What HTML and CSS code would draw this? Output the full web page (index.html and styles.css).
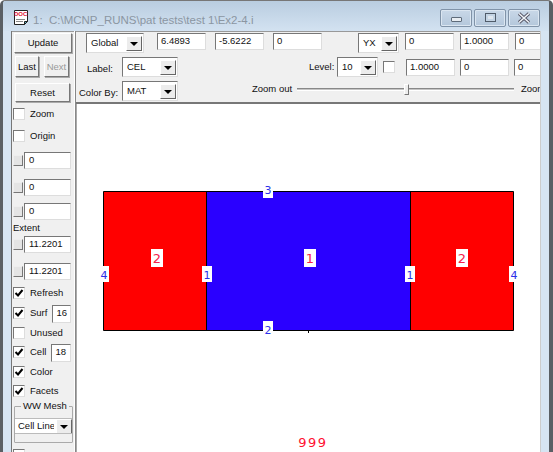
FILE: index.html
```html
<!DOCTYPE html>
<html lang="en">
<head>
<meta charset="utf-8">
<title>MCNP plot</title>
<link rel="stylesheet" href="styles.css">
</head>
<body>
<div class="window">
  <header class="titlebar">
    <svg class="docicon" width="16" height="17" viewBox="0 0 16 17"><path d="M1.500 1.500h13v11l-3 3h-10z" fill="#fff" stroke="#222"/><path d="M3 10.500h9M3 12.500h7" stroke="#888"/><path d="M11.500 15.500v-3h3z" fill="#5bc" stroke="#222"/></svg>
    <span class="doc-tag">DOC</span>
    <span class="title">1:&nbsp; C:\MCNP_RUNS\pat tests\test 1\Ex2-4.i</span>
    <div class="controls">
      <div class="ctl ctl-min"><span class="glyph-min"></span></div>
      <div class="ctl ctl-max"><span class="glyph-max"></span></div>
      <div class="ctl ctl-close"><svg width="16" height="12" viewBox="0 0 16 12"><path d="M3 1.500 13 10.500M13 1.500 3 10.500" stroke="#556" stroke-width="3.400"/><path d="M3 1.500 13 10.500M13 1.500 3 10.500" stroke="#eef2f6" stroke-width="1.600"/></svg></div>
    </div>
  </header>
  <div class="client">
    <aside class="sidebar">
      <div class="btn btn-update">Update</div>
      <div class="btn-row"><div class="btn btn-last">Last</div><div class="btn btn-next">Next</div></div>
      <div class="btn btn-reset">Reset</div>
      <div class="check check-zoom"><span class="box"></span>Zoom</div>
      <div class="check check-origin"><span class="box"></span>Origin</div>
      <div class="spin spin-1"><span class="nub"></span><div class="field grow">0</div></div>
      <div class="spin spin-2"><span class="nub"></span><div class="field grow">0</div></div>
      <div class="spin spin-2b"><span class="nub"></span><div class="field grow">0</div></div>
      <div class="extent">Extent</div>
      <div class="spin spin-3"><span class="nub"></span><div class="field grow">11.2201</div></div>
      <div class="spin spin-4"><span class="nub"></span><div class="field grow">11.2201</div></div>
      <div class="check check-refresh"><span class="box on"></span>Refresh</div>
      <div class="check check-surf"><span class="box on"></span>Surf<div class="field field-surf">16</div></div>
      <div class="check check-unused"><span class="box"></span>Unused</div>
      <div class="check check-cell"><span class="box on"></span>Cell<div class="field field-cell">18</div></div>
      <div class="check check-color"><span class="box on"></span>Color</div>
      <div class="check check-facets"><span class="box on"></span>Facets</div>
      <fieldset class="wwmesh">
        <legend>WW Mesh</legend>
        <div class="mesh-select"><span class="mesh-text">Cell Line</span><span class="arrow"></span></div>
      </fieldset>
      <div class="check check-last"><span class="box"></span>Dest</div>
    </aside>
    <main class="main">
      <div class="toolbar">
        <div class="tb-row tb-row-1">
          <div class="select select-global"><span>Global</span><span class="arrow"></span></div>
          <div class="field f-49 m-first">6.4893</div>
          <div class="field f-49 m-9">-5.6222</div>
          <div class="field f-49 m-10">0</div>
          <div class="select select-yx"><span>YX</span><span class="arrow"></span></div>
          <div class="field f-49 m-6">0</div>
          <div class="field f-49 m-6">1.0000</div>
          <div class="field f-49 m-6">0</div>
        </div>
        <div class="tb-row tb-row-2">
          <label class="lbl lbl-label">Label:</label>
          <div class="select select-label"><span>CEL</span><span class="arrow"></span></div>
          <label class="lbl lbl-level">Level:</label>
          <div class="select select-level"><span>10</span><span class="arrow"></span></div>
          <span class="box box-level"></span>
          <div class="field f-49 m-11">1.0000</div>
          <div class="field f-49 m-5">0</div>
          <div class="field f-49 m-5">0</div>
        </div>
        <div class="tb-row tb-row-3">
          <label class="lbl lbl-color">Color By:</label>
          <div class="select select-label"><span>MAT</span><span class="arrow"></span></div>
          <label class="lbl lbl-zoomout">Zoom out</label>
          <div class="slider"><span class="thumb"></span></div>
          <label class="lbl lbl-zoomin">Zoom</label>
        </div>
      </div>
      <div class="canvas">
        <svg class="plot" width="465" height="348" viewBox="76 104 465 348">
          <rect x="103.500" y="191.500" width="103" height="139" fill="#ff0000"/>
          <rect x="206.500" y="191.500" width="204" height="139" fill="#2a00ff"/>
          <rect x="410.500" y="191.500" width="103" height="139" fill="#ff0000"/>
          <path d="M103.500 191.500H513.500V330.500H103.500ZM206.500 191.500V330.500M410.500 191.500V330.500M308.500 330.500V333" fill="none" stroke="#000"/>
          <g fill="#fff">
            <rect x="151" y="249" width="12" height="18"/><rect x="304" y="249" width="12" height="18"/><rect x="456" y="249" width="12" height="18"/>
            <rect x="263" y="186" width="10" height="12"/><rect x="263" y="321" width="10" height="12"/>
            <rect x="202" y="266" width="10" height="16"/><rect x="405" y="266" width="10" height="16"/>
            <rect x="103" y="266" width="6" height="16"/><rect x="509" y="266" width="5" height="16"/>
          </g>
          <g class="cell-num">
            <text x="157" y="263">2</text><text x="310" y="263">1</text><text x="462" y="263">2</text>
            <text class="tail" x="313" y="447">999</text>
          </g>
          <g class="surf-num">
            <text x="268" y="194">3</text><text x="268" y="334">2</text>
            <text x="207" y="279">1</text><text x="410" y="279">1</text>
            <text x="104" y="279">4</text><text x="514" y="279">4</text>
          </g>
        </svg>
      </div>
    </main>
  </div>
</div>
</body>
</html>
```
FILE: styles.css
```css
html, body { margin: 0; padding: 0; height: 452px; overflow: hidden; background: #fff; }
* { box-sizing: border-box; }
body { font: 9.5px/12px "Liberation Sans", Arial, sans-serif; color: #111; }

.window {
  width: 553px; height: 452px; overflow: hidden;
  display: flex; flex-direction: column;
  background: #d6e4f2;
  border-left: 3px solid #5a5f64; border-right: 4px solid #5a5f64;
  border-top: 1px solid #777;
  border-top-left-radius: 5px; border-top-right-radius: 5px;
}

.titlebar {
  position: relative;
  height: 30px; flex: none;
  display: flex; align-items: center;
  padding: 0 0 0 10px;
  background: linear-gradient(#b9cde0, #d3e2f1);
}
.docicon { flex: none; margin-top: 3px; }
.doc-tag { position: absolute; left: 11px; top: 10px; font: bold 6px/6px "Liberation Sans", sans-serif; color: #e01030; }
.title { margin-left: 4px; margin-top: 8px; font-size: 11.500px; color: #8b96a2; white-space: nowrap; }
.controls { margin-left: auto; margin-right: 9px; margin-top: 3px; display: flex; gap: 2px; }
.ctl {
  width: 32px; height: 18px;
  display: flex; align-items: center; justify-content: center;
  border: 1px solid #8093a8; border-radius: 2px;
  background: linear-gradient(#c9d8e8, #b4c7db);
  box-shadow: inset 0 0 0 1px #dbe6f1;
}
.glyph-min { width: 11px; height: 5px; margin-top: 3px; background: #e8edf2; border: 1px solid #5e6b7a; border-radius: 1px; }
.glyph-max { width: 11px; height: 9px; background: #dfe7ef; border: 1px solid #505c6a; box-shadow: inset 0 0 0 2px #c4d4e4; }

.client {
  flex: 1; min-height: 0;
  display: flex;
  margin: 0 8px 0 8px;
  background: #f0f0f0;
  border-left: 1px solid #777;
}

.sidebar {
  width: 63px; flex: none;
  height: 421px; overflow: hidden;
  padding: 2px 1px 0 1px;
  background: #f0f0f0;
  box-shadow: inset 0 1px 0 #999;
  display: flex; flex-direction: column; align-items: flex-start;
}
.sidebar > * { flex: none; }
.btn {
  display: flex; align-items: center; justify-content: center;
  background: #f0f0f0;
  border: 1px solid; border-color: #fff #777 #777 #fff;
  box-shadow: 1px 1px 0 #aaa;
}
.btn-update { width: 58px; height: 20px; margin-left: 1px; }
.btn-row { display: flex; gap: 5px; margin: 3px 0 0 2px; }
.btn-last { width: 24px; height: 21px; }
.btn-next { width: 25px; height: 21px; color: #9a9a9a; }
.btn-reset { width: 55px; height: 19px; margin: 6px 0 0 2px; }

.check { display: flex; align-items: center; height: 12px; white-space: nowrap; }
.box {
  flex: none; width: 12px; height: 12px; margin-right: 5px;
  background: #fff; border: 1px solid #777; border-right-color: #ddd; border-bottom-color: #ddd;
}
.box.on {
  background: url("data:image/svg+xml,%3Csvg xmlns='http://www.w3.org/2000/svg' width='10' height='10'%3E%3Cpath d='M1.500 5 4 7.500 8.500 2' fill='none' stroke='%23000' stroke-width='2'/%3E%3C/svg%3E") center no-repeat #fff;
}
.check-zoom { margin-top: 6px; }
.check-origin { margin-top: 10px; }
.check-refresh { margin-top: 7px; }
.check-surf { margin-top: 8px; }
.check-unused { margin-top: 8px; }
.check-cell { margin-top: 7px; }
.check-color { margin-top: 8px; }
.check-facets { margin-top: 7px; }
.check-last { margin-top: 6px; }

.field-surf { width: 19px; height: 18px; margin-left: 5px; margin-top: 2px; }
.field-cell { width: 20px; height: 18px; margin-left: 5px; margin-top: 2px; }

.spin { display: flex; align-items: center; width: 58px; }
.spin-1 { margin-top: 10px; }
.spin-2 { margin-top: 10px; }
.spin-2b { margin-top: 7px; }
.spin-3 { margin-top: 1px; }
.spin-4 { margin-top: 10px; }
.nub {
  flex: none; width: 10px; height: 11px; margin-right: 1px;
  background: #e4e4e4; border: 1px solid; border-color: #eee #777 #777 #eee;
}
.grow { flex: 1; height: 17px; }
.extent { margin-top: 0; height: 15px; line-height: 15px; }

.field {
  background: #fff;
  border: 1px solid; border-color: #777 #ddd #ddd #777;
  padding: 0 0 0 3px;
  line-height: 14px;
  white-space: nowrap; overflow: hidden;
  flex: none;
}
.grow.field { flex: 1; padding-left: 4px; }

.wwmesh {
  width: 59px; height: 42px; margin: 4px 0 0 1px; padding: 0;
  border: 1px solid #aaa; border-radius: 1px;
  background: #f0f0f0;
  display: block;
}
.wwmesh legend { padding: 0 2px; margin-left: 6px; line-height: 10px; }
.mesh-select {
  display: flex; align-items: center; justify-content: space-between;
  height: 16px; margin-top: 7px; padding-left: 3px;
  background: #fff; border-top: 1px solid #bbb; border-bottom: 1px solid #bbb;
  overflow: hidden;
}
.mesh-text { white-space: nowrap; width: 36px; overflow: hidden; }

.arrow {
  position: relative; flex: none; display: block;
  width: 16px; height: 15px;
  background: #ececec;
  border: 1px solid; border-color: #fff #666 #666 #fff;
}
.arrow::after {
  content: ""; position: absolute; left: 3px; top: 5px;
  border: 4px solid transparent; border-top: 4px solid #000; border-bottom: 0;
}

.main {
  flex: 1; min-width: 0;
  display: flex; flex-direction: column;
  border-left: 1px solid #888;
  border-right: 1px solid #ccc;
  box-shadow: -1px 0 0 #fff;
}
.toolbar {
  height: 73px; flex: none;
  padding-top: 1px;
  overflow: hidden;
  background: #f0f0f0;
  border-bottom: 2px solid #777;
  border-top: 1px solid #999;
}
.tb-row { display: flex; align-items: center; white-space: nowrap; width: 470px; }
.tb-row-1 { height: 20px; margin-bottom: 4px; }
.tb-row-2 { height: 20px; margin-bottom: 4px; }
.tb-row-3 { height: 20px; }

.select {
  flex: none; display: flex; align-items: center; justify-content: space-between;
  height: 20px; padding: 0 1px 0 4px;
  background: #fff;
  border: 1px solid; border-color: #777 #ddd #ddd #777;
}
.select-global { width: 58px; margin-left: 10px; }
.select-label { width: 56px; }
.select-yx { width: 41px; margin-left: 36px; }
.select-level { width: 41px; margin-left: 1px; }

.f-49 { width: 49px; height: 17px; }
.tb-row-1 .field { align-self: flex-start; }
.m-first { margin-left: 13px; }
.m-9 { margin-left: 9px; }
.m-10 { margin-left: 9px; }
.m-6 { margin-left: 6px; }
.m-11 { margin-left: 11px; }
.m-5 { margin-left: 5px; }

.lbl { flex: none; }
.lbl-label { margin-left: 11px; width: 35px; margin-top: 4px; }
.lbl-color { margin-left: 3px; width: 43px; margin-top: 4px; }
.lbl-level { margin-left: 131px; width: 27px; }
.lbl-zoomout { margin-left: 74px; width: 45px; margin-top: -4px; }
.lbl-zoomin { margin-left: 7px; margin-top: -4px; }
.box-level { margin: 0 0 0 5px; }

.slider {
  position: relative; flex: none; width: 217px; height: 3px; margin-top: -4px;
  background: #c4c4c4; border-top: 1px solid #888; border-bottom: 1px solid #fff;
}
.thumb {
  position: absolute; left: 107px; top: -5px; width: 5px; height: 11px;
  background: #eee; border: 1px solid; border-color: #fff #777 #777 #fff;
}

.canvas { flex: 1; min-height: 0; background: #fff; border-left: 1px solid #aaa; overflow: hidden; }
.plot { display: block; margin-left: -1px; }
.cell-num text { font: 13px "DejaVu Sans", sans-serif; fill: #f4204a; text-anchor: middle; }
.cell-num .tail { letter-spacing: 1.500px; fill: #ff1030; }
.surf-num text { font: 11px "DejaVu Sans", sans-serif; fill: #2a30e8; text-anchor: middle; }
```
